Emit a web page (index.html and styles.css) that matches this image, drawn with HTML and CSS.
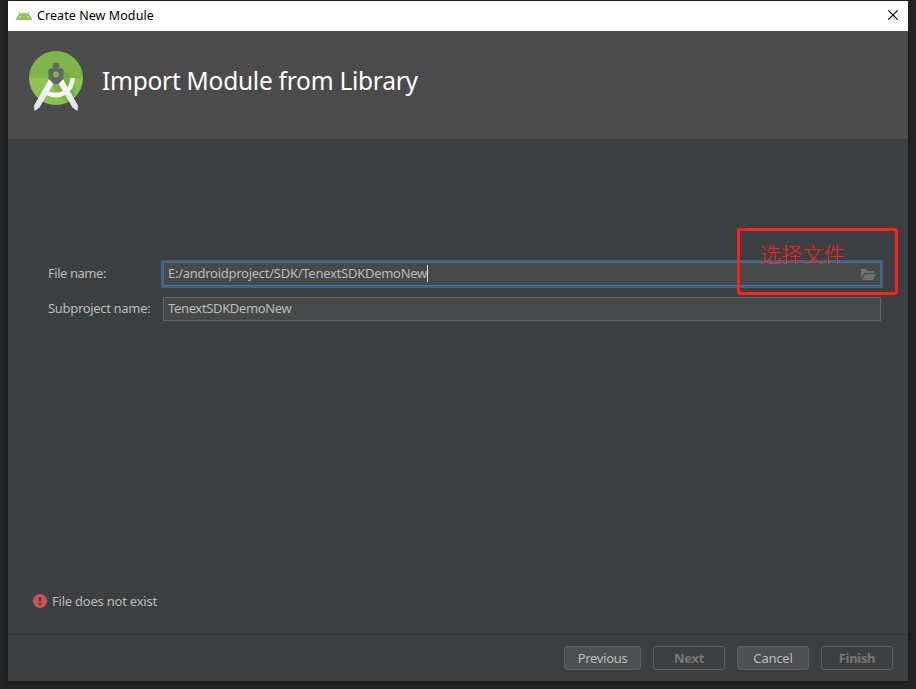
FILE: index.html
```html
<!DOCTYPE html>
<html lang="en">
<head>
<meta charset="utf-8">
<title>Create New Module</title>
<link rel="stylesheet" href="styles.css">
</head>
<body>
<div class="window">
  <div class="titlebar">
    <svg class="droid" width="16" height="9" viewBox="0 0 16 9"><path d="M0 9C.2 6.200 1.500 4.200 3.600 2.900L2.400.6 3 .2 4.500 2.400Q8 .9 11.500 2.400L13 .2l.6.4-1.200 2.300C14.500 4.200 15.800 6.200 16 9z" fill="#97c45a"/><circle cx="4.300" cy="5.800" r=".7" fill="#fff"/><circle cx="11.700" cy="5.800" r=".7" fill="#fff"/></svg>
    <span class="caption">Create New Module</span>
    <svg class="close" width="10" height="10" viewBox="0 0 10 10"><path d="M.2.2l9.600 9.600M9.800.2L.2 9.800" stroke="#000" stroke-width="1.100"/></svg>
  </div>
  <header class="header">
    <svg class="logo" width="54" height="60" viewBox="0 0 54 60">
      <defs>
        <clipPath id="disc"><circle cx="27" cy="27" r="27"/></clipPath>
        <linearGradient id="leg" x1="0" y1="0" x2="0" y2="1"><stop offset="0" stop-color="#fff"/><stop offset="1" stop-color="#dedede"/></linearGradient>
      </defs>
      <g clip-path="url(#disc)">
        <path d="M0 0h54v27H0z" fill="#7fb548"/>
        <path d="M0 27h54v27H0z" fill="#8bc34f"/>
        <path d="M32 16L46 30V44L38 52L24 36z" fill="#568a32" opacity=".3"/>
      </g>
      <path d="M20.500 27.500l5 3.500L10.500 56.500 5.500 60 5 54.500zM33.500 27.500l-5 3.500L43.500 56.500l5 3.500 .5-5.500z" fill="url(#leg)"/>
      <path d="M16 41Q27 47 36 41.500Q43.500 36.500 43.500 27" fill="none" stroke="#f4f4f4" stroke-width="4.600"/>
      <path d="M24 12h6v5h2.500l2 2v8.500L29.500 33h-5L19.500 27.500V19l2-2H24z" fill="#666"/>
      <circle cx="27" cy="23.500" r="3.800" fill="#7fb548" stroke="#575757"/>
    </svg>
    <h1 class="heading">Import Module from Library</h1>
  </header>
  <main class="content">
    <div class="row">
      <label class="label label-file">File name:</label>
      <div class="field focused"><span class="path">E:/androidproject/SDK/TenextSDKDemoNew</span><i class="caret"></i>
        <svg class="folder" width="15" height="12" viewBox="0 0 15 12"><path d="M0 0h5l1.500 2H13v2H3.200L0 10z" fill="#6b7275"/><path d="M4 5h11l-3 6H1z" fill="#6b7275"/></svg>
      </div>
    </div>
    <div class="row">
      <label class="label label-sub">Subproject name:</label>
      <div class="field"><span class="name">TenextSDKDemoNew</span></div>
    </div>
    <div class="error">
      <svg width="14" height="14" viewBox="0 0 14 14"><circle cx="7" cy="7" r="7" fill="#c75450"/><path d="M6 3h2v5H6zM6 9h2v2H6z" fill="#3c3f41"/></svg>
      <span class="message">File does not exist</span>
    </div>
  </main>
  <footer class="footer">
    <button class="button previous"><span>Previous</span></button>
    <button class="button next" disabled><span>Next</span></button>
    <button class="button cancel"><span>Cancel</span></button>
    <button class="button finish" disabled><span>Finish</span></button>
  </footer>
</div>
<div class="callout"><span>选择文件</span></div>
</body>
</html>
```
FILE: styles.css
```css
* { box-sizing: border-box; }
body {
  margin: 0;
  padding: 1px 8px 8px;
  height: 689px;
  overflow: hidden;
  background: #252525;
  font: 13px/18px "Noto Sans", "Open Sans", sans-serif;
  color: #bbb;
}
.window {
  width: 900px;
  height: 680px;
  display: flex;
  flex-direction: column;
  background: #3c3f41;
  box-shadow: 0 1px 7px #151515;
}
.titlebar {
  height: 30px;
  display: flex;
  align-items: center;
  padding: 0 10px 0 8px;
  background: #fff;
  color: #000;
}
.droid { margin-top: -2px; }
.caption { margin-left: 5px; font-size: 12.500px; letter-spacing: .07px; }
.close { margin-left: auto; margin-top: -2px; }
.header {
  height: 108px;
  display: flex;
  align-items: flex-start;
  padding: 20px 21px;
  background: #4b4b4b;
}
.heading {
  margin: 12px 0 0 19px;
  font-size: 24.500px;
  line-height: 36px;
  font-weight: 400;
  letter-spacing: -.26px;
  color: #fff;
  white-space: nowrap;
}
.content {
  height: 495px;
  display: flex;
  flex-direction: column;
  padding: 123px 27px 0 40px;
}
.row { display: flex; align-items: center; height: 24px; margin-bottom: 11px; }
.label { width: 115px; padding-bottom: 2px; white-space: nowrap; }
.label-file { letter-spacing: -.45px; }
.label-sub { letter-spacing: -.32px; }
.field {
  width: 718px;
  height: 24px;
  display: flex;
  align-items: center;
  padding: 0 4px;
  border: 1px solid #646464;
  background: #45494a;
}
.path, .name { padding-bottom: 2px; }
.path { letter-spacing: -.265px; }
.name { letter-spacing: -.35px; }
.focused { border-color: #466d94; box-shadow: 0 0 0 2px #3d6185; }
.caret { width: 1px; height: 17px; margin-bottom: 1px; background: #ddd; }
.folder { margin-left: auto; margin-top: 1px; }
.error { display: flex; align-items: center; gap: 5px; margin: 260px 0 0 -15px; height: 18px; }
.message { letter-spacing: -.22px; }
.footer {
  height: 47px;
  display: flex;
  justify-content: flex-end;
  align-items: flex-start;
  gap: 12px;
  padding: 11px 15px 0 0;
  border-top: 1px solid #323537;
}
.button {
  width: 72px;
  height: 24px;
  padding: 0;
  border: 1px solid #5e6060;
  border-radius: 3px;
  background: #4c5052;
  box-shadow: 0 1px 1px #36393a;
  color: #bbb;
  font: inherit;
  letter-spacing: -.3px;
}
.previous { width: 77px; }
.cancel { letter-spacing: -.2px; }
.button:disabled { background: transparent; box-shadow: none; color: #777; font-weight: 700; }
.callout {
  position: absolute;
  left: 737px;
  top: 228px;
  width: 161px;
  height: 67px;
  padding: 7px 0 0 20px;
  border: 3px solid #ff2015;
  border-radius: 3px;
  color: #ff2015;
  font: 300 21px/30px "Noto Sans CJK SC", sans-serif;
  letter-spacing: .2px;
}
```
